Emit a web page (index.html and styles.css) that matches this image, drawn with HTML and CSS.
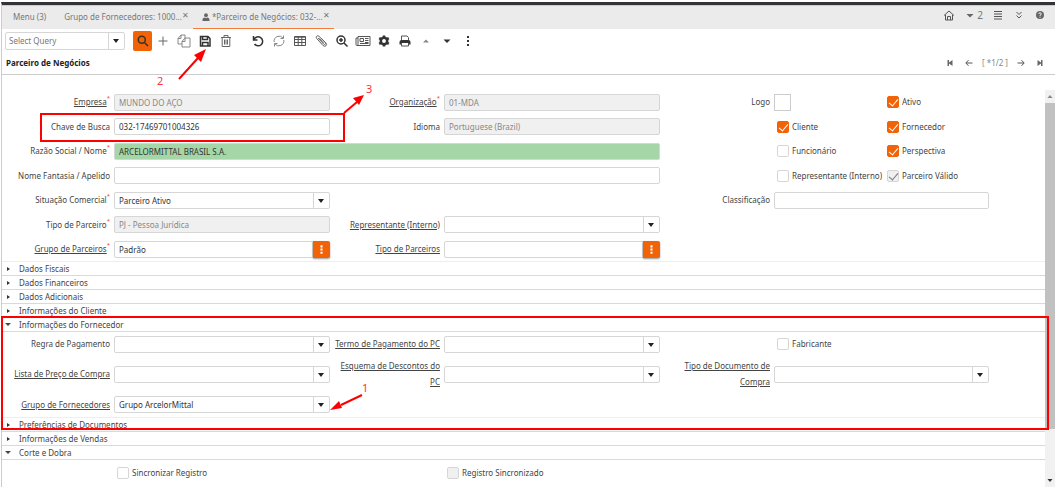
FILE: index.html
```html
<!DOCTYPE html>
<html lang="pt-BR">
<head>
    <meta charset="UTF-8">
    <meta name="viewport" content="width=device-width, initial-scale=1.0">
    <title>Parceiro de Negócios</title>
    <link rel="stylesheet" href="styles.css">
</head>
<body>

<div class="window">
    <!-- Abas -->
    <header class="tabbar">
        <nav class="tabs">
            <a class="tab" href="#">Menu (3)</a>
            <a class="tab" href="#">Grupo de Fornecedores: 1000...<span class="close">✕</span></a>
            <a class="tab active" href="#">
                <svg class="user" viewBox="0 0 8 8"><circle cx="4" cy="2.2" r="1.9"/><path d="M.5 8V6.600Q.5 4.600 2.500 4.400L4 5l1.500-.6Q7.500 4.600 7.500 6.600V8Z"/></svg>*Parceiro de Negócios: 032-...<span class="close">✕</span>
            </a>
        </nav>
        <div class="shortcuts">
            <button aria-label="Início"><svg viewBox="0 0 12 12"><path class="line" d="M1 6.500 6 2l5 4.500M2.500 6v5h7V6M4.500 11V7.500h3V11"/></svg></button>
            <button class="count"><svg viewBox="0 0 12 12"><path d="M2.500 5h7L6 8.500Z"/></svg>2</button>
            <button aria-label="Menu"><svg viewBox="0 0 12 12"><path class="line" d="M2 2.500h8M2 5h8M2 7.500h8M2 10h8"/></svg></button>
            <button aria-label="Expandir"><svg viewBox="0 0 12 12"><path class="line" d="m3.500 3 2.500 2.500L8.500 3m-5 3.500L6 9l2.500-2.500"/></svg></button>
            <button aria-label="Ajuda"><svg viewBox="0 0 12 12"><circle cx="6" cy="6" r="4"/><path class="light" d="M4.700 5Q4.700 3.800 6 3.800T7.300 5Q7.300 5.800 6 6.300V7M6 7.700v1"/></svg></button>
        </div>
    </header>

    <!-- Barra de ferramentas -->
    <div class="toolbar">
        <div class="combo query">
            <select aria-label="Select Query"><option>Select Query</option></select>
        </div>
        <button class="tool search" aria-label="Pesquisar"><svg viewBox="0 0 14 14"><circle class="thick" cx="5.800" cy="5.800" r="3.500"/><path class="thick" d="m8.500 8.500 3.500 3.500"/></svg></button>
        <button class="tool" aria-label="Novo"><svg viewBox="0 0 14 14"><path class="line mid" d="M7 2.500v9M2.500 7h9"/></svg></button>
        <button class="tool" aria-label="Copiar"><svg viewBox="0 0 14 14"><path class="line soft" d="M5 10H1V4.500L4 1h4v3M4 1v3.500H1M5 13V7.500L8 4h5v9ZM8 4v3.500H5"/></svg></button>
        <button class="tool" aria-label="Salvar"><svg viewBox="0 0 14 14"><path class="thick" d="M2.500 2.500h7.500l2 2v7.500h-9.500ZM4.500 2.500v3h5v-3M4.500 12V8.500h5.500V12"/></svg></button>
        <button class="tool" aria-label="Excluir"><svg viewBox="0 0 14 14"><path class="line mid" d="M2 3.500h10M5 3.500V1.500h4v2M3.200 3.500v9h7.600v-9M5.500 5.500v5M7 5.500v5M8.500 5.500v5"/></svg></button>
        <button class="tool apart" aria-label="Desfazer"><svg viewBox="0 0 14 14"><path class="thick" d="M2.500 2v4h4M3 5.500a4.500 4.500 0 1 1 .5 4.500"/></svg></button>
        <button class="tool" aria-label="Atualizar"><svg viewBox="0 0 14 14"><path class="line soft" d="M2.200 8A5 5 0 0 1 11 4M11.500 1.500V4.500H8.500M11.800 6A5 5 0 0 1 3 10M2.500 12.500v-3h3"/></svg></button>
        <button class="tool" aria-label="Grade"><svg viewBox="0 0 14 14"><path class="line" d="M1.500 2.500h11v9h-11ZM1.500 3.200h11M1.500 5.500h11M1.500 8.500h11M5.200 3v8.500M8.800 3v8.500"/></svg></button>
        <button class="tool" aria-label="Anexo"><svg viewBox="0 0 14 14"><path class="line mid" d="m4 4 5.500 6q1 1 1.800.3t0-1.800L5 2.300Q3.800 1.200 2.700 2.200t0 2.300L9 11.500q1.800 1.500 3 .3t0-2.600L7 4M5.500 4.500l4 4.500"/></svg></button>
        <button class="tool" aria-label="Zoom"><svg viewBox="0 0 14 14"><circle class="thick" cx="6" cy="6" r="4"/><path class="thick" d="m9 9 3.500 3.500M6 4v4M4 6h4"/></svg></button>
        <button class="tool wide" aria-label="Relatório"><svg viewBox="0 0 16 14"><path class="line" d="M3 2.500h12v9H2q-1 0-1-1V4h2M3 2.500v8q0 1-1 1M5 4.500h3.500v3H5ZM10 4.500h3.500M10 6.500h3.500M10 8.500h3.500M5 9.500h8.500"/></svg></button>
        <button class="tool" aria-label="Processo"><svg viewBox="0 0 14 14"><circle class="gear" cx="7" cy="7" r="3.200"/><path class="teeth" d="M7 1.500v2M7 10.500v2M2.200 4.200l1.800 1M10 8.800l1.800 1M2.200 9.800l1.800-1M10 5.200l1.800-1"/></svg></button>
        <button class="tool" aria-label="Imprimir"><svg viewBox="0 0 14 14"><path d="M1.500 10.500V8q0-2 2-2h7q2 0 2 2v2.500h-2V9h-7v1.500Z"/><path class="line" d="M3.500 6V2h5.500l1.500 1.500V6M3.500 9v3h7V9"/></svg></button>
        <button class="tool" aria-label="Anterior"><svg viewBox="0 0 14 14"><path class="faint" d="M4 8.500h6L7 5.500Z"/></svg></button>
        <button class="tool" aria-label="Próximo"><svg viewBox="0 0 14 14"><path d="M3.500 5.500h7L7 9Z"/></svg></button>
        <button class="tool" aria-label="Mais"><svg viewBox="0 0 14 14"><path d="M6 2h2v2H6ZM6 6h2v2H6ZM6 10h2v2H6Z"/></svg></button>
    </div>

    <div class="titlebar">
        <h1>Parceiro de Negócios</h1>
        <div class="pager">
            <button aria-label="Primeiro"><svg viewBox="0 0 12 12"><path d="M3.500 3H5v2.500L8.500 3v6L5 6.500V9H3.500Z"/></svg></button>
            <button aria-label="Registro anterior"><svg viewBox="0 0 12 12"><path class="line" d="M9.500 6H3M5.500 3.200 2.800 6l2.700 2.800"/></svg></button>
            <span>[ *1/2 ]</span>
            <button aria-label="Próximo registro"><svg viewBox="0 0 12 12"><path class="line" d="M2.500 6H9M6.500 3.200 9.200 6 6.500 8.800"/></svg></button>
            <button aria-label="Último"><svg viewBox="0 0 12 12"><path d="M8.500 3H7v2.500L3.500 3v6L7 6.500V9h1.500Z"/></svg></button>
        </div>
    </div>

    <div class="content">
        <form class="detail">
            <div class="fields main">
                <label class="start link req" for="empresa">Empresa</label>
                <input class="box" id="empresa" value="MUNDO DO AÇO" disabled>
                <label class="link req" for="org">Organização</label>
                <input class="box" id="org" value="01-MDA" disabled>
                <label for="logo">Logo</label>
                <div class="checks">
                    <button type="button" class="logo" id="logo"></button>
                    <label class="check"><input type="checkbox" checked>Ativo</label>
                </div>

                <label class="start" for="chave">Chave de Busca</label>
                <input class="box" id="chave" value="032-17469701004326">
                <label for="idioma">Idioma</label>
                <input class="box" id="idioma" value="Portuguese (Brazil)" disabled>
                <div class="checks">
                    <label class="check"><input type="checkbox" checked>Cliente</label>
                    <label class="check"><input type="checkbox" checked>Fornecedor</label>
                </div>

                <label class="start req" for="razao">Razão Social / Nome</label>
                <input class="box long filled" id="razao" value="ARCELORMITTAL BRASIL S.A.">
                <div class="checks">
                    <label class="check"><input type="checkbox">Funcionário</label>
                    <label class="check"><input type="checkbox" checked>Perspectiva</label>
                </div>

                <label class="start" for="fantasia">Nome Fantasia / Apelido</label>
                <input class="box long" id="fantasia">
                <div class="checks">
                    <label class="check"><input type="checkbox">Representante (Interno)</label>
                    <label class="check"><input type="checkbox" checked disabled>Parceiro Válido</label>
                </div>

                <label class="start req" for="situacao">Situação Comercial</label>
                <div class="box combo"><select id="situacao"><option>Parceiro Ativo</option></select></div>
                <label class="third" for="classificacao">Classificação</label>
                <input class="box" id="classificacao">

                <label class="start req" for="tipo">Tipo de Parceiro</label>
                <input class="box" id="tipo" value="PJ - Pessoa Jurídica" disabled>
                <label class="link" for="representante">Representante (Interno)</label>
                <div class="box combo"><select id="representante"><option></option></select></div>

                <label class="start link req" for="grupo">Grupo de Parceiros</label>
                <div class="lookup"><input class="box" id="grupo" value="Padrão"><button type="button" aria-label="Buscar grupo"><svg viewBox="0 0 16 16"><path d="M7 4h2v2H7ZM7 7h2v2H7ZM7 10h2v2H7Z"/></svg></button></div>
                <label class="link" for="tipos">Tipo de Parceiros</label>
                <div class="lookup"><input class="box" id="tipos"><button type="button" aria-label="Buscar tipo"><svg viewBox="0 0 16 16"><path d="M7 4h2v2H7ZM7 7h2v2H7ZM7 10h2v2H7Z"/></svg></button></div>
            </div>

            <button type="button" class="group">Dados Fiscais</button>
            <button type="button" class="group">Dados Financeiros</button>
            <button type="button" class="group">Dados Adicionais</button>
            <button type="button" class="group">Informações do Cliente</button>
            <button type="button" class="group open">Informações do Fornecedor</button>

            <div class="fields supplier">
                <label class="start" for="regra">Regra de Pagamento</label>
                <div class="box combo"><select id="regra"><option></option></select></div>
                <label class="link" for="termo">Termo de Pagamento do PC</label>
                <div class="box combo"><select id="termo"><option></option></select></div>
                <div class="checks">
                    <label class="check"><input type="checkbox">Fabricante</label>
                </div>

                <label class="start link" for="lista">Lista de Preço de Compra</label>
                <div class="box combo"><select id="lista"><option></option></select></div>
                <label class="link" for="esquema">Esquema de Descontos do PC</label>
                <div class="box combo"><select id="esquema"><option></option></select></div>
                <label class="link" for="documento">Tipo de Documento de Compra</label>
                <div class="box combo"><select id="documento"><option></option></select></div>

                <label class="start link" for="fornecedores">Grupo de Fornecedores</label>
                <div class="box combo"><select id="fornecedores"><option>Grupo ArcelorMittal</option></select></div>
            </div>

            <button type="button" class="group">Preferências de Documentos</button>
            <button type="button" class="group">Informações de Vendas</button>
            <button type="button" class="group open">Corte e Dobra</button>

            <div class="fields sync">
                <div class="first"><label class="check"><input type="checkbox">Sincronizar Registro</label></div>
                <div class="second"><label class="check"><input type="checkbox" disabled>Registro Sincronizado</label></div>
            </div>
        </form>

        <div class="scrollbar">
            <svg viewBox="0 0 10 13"><path class="faint" d="M2.500 8h5L5 5Z"/></svg>
            <div class="track"><div class="thumb"></div></div>
            <svg viewBox="0 0 10 13"><path d="M2.500 5h5L5 8Z"/></svg>
        </div>
    </div>
</div>

<!-- Marcações do passo a passo -->
<svg class="marks" width="1056" height="490" viewBox="0 0 1056 490">
    <rect x="41" y="114" width="303" height="27"/>
    <rect x="2" y="317" width="1046" height="112"/>
    <path d="M344 113 357 102M179 79 198 58M362 395 341 405"/>
    <path class="head" d="m364 95-5 10-6-7ZM206 49l-5 13-7-7ZM330 410l9-9 3 7Z"/>
    <text x="366" y="93">3</text>
    <text x="157" y="85">2</text>
    <text x="362" y="392">1</text>
</svg>

</body>
</html>
```

FILE: styles.css
```css
* {
    box-sizing: border-box;
}
body {
    margin: 0;
    padding: 2px 1px 3px;
    background: #fff;
    color: #444;
    font-family: "Noto Sans", "Open Sans", sans-serif;
    font-size: 8px;
    line-height: 16px;
}
button, input, select {
    margin: 0;
    padding: 0;
    border: 0;
    background: none;
    color: inherit;
    font: inherit;
}
svg {
    display: block;
    fill: #333;
}
.line, .thick, .light, .teeth, .gear {
    fill: none;
    stroke: #555;
    stroke-width: 1;
}
.thick {
    stroke: #333;
    stroke-width: 1.5;
}
.mid {
    stroke: #666;
}
.soft {
    stroke: #888;
}
.light {
    stroke: #eee;
}
.gear, .teeth {
    stroke: #333;
    stroke-width: 2.5;
}
.faint {
    fill: #888;
}
.window {
    display: flex;
    flex-direction: column;
    min-height: calc(100vh - 5px);
    border-top: 3px solid #333438;
    border-left: 1px solid #ccc;
}

/* Abas */
.tabbar {
    display: flex;
    justify-content: space-between;
    height: 24px;
    border-top: 1px solid #ccc;
    background: #ebebeb;
    color: #777;
}
.tabs {
    display: flex;
}
.tab {
    display: flex;
    align-items: center;
    padding: 0 4px 0 9px;
    border-bottom: 1px solid transparent;
    color: inherit;
    text-decoration: none;
    white-space: nowrap;
}
.tab:first-child {
    padding: 0 9px 0 11px;
}
.tab.active {
    border-color: #f47b3a;
}
.close {
    padding-bottom: 4px;
}
.user {
    width: 8px;
    height: 8px;
    margin-right: 2px;
    fill: #666;
}
.shortcuts {
    display: flex;
    align-items: center;
    gap: 9px;
    padding: 0 9px 6px 0;
    font-size: 10px;
}
.shortcuts svg, .pager svg {
    width: 12px;
    height: 12px;
    fill: #666;
}
.count {
    display: flex;
    align-items: center;
    gap: 1px;
}

/* Barra de ferramentas */
.toolbar {
    display: flex;
    align-items: center;
    height: 23px;
    padding-left: 3px;
}
.tool {
    display: flex;
    align-items: center;
    justify-content: center;
    width: 21px;
    height: 20px;
}
.tool svg {
    width: 14px;
    height: 14px;
}
.tool.wide svg {
    width: 16px;
}
.tool.search {
    width: 19px;
    margin-left: 8px;
    border-radius: 2px;
    background: #f26207;
}
.tool.apart {
    margin-left: 11px;
}
.titlebar {
    display: flex;
    align-items: center;
    justify-content: space-between;
    height: 23px;
    padding: 0 9px 0 4px;
    border-bottom: 1px solid #ccc;
}
h1 {
    margin: 0;
    color: #222;
    font-size: 8px;
}
.pager {
    display: flex;
    align-items: center;
    gap: 7px;
    color: #888;
}

/* Formulário */
.content {
    display: flex;
    flex: 1;
}
.detail {
    flex: 1;
    min-width: 0;
}
.fields {
    display: grid;
    grid-template-columns: 112fr 216fr 114fr 216fr 114fr 215fr 56fr;
    align-items: center;
}
.main {
    grid-auto-rows: 24px 25px;
    padding-top: 15px;
    border-bottom: 1px solid #eee;
}
.supplier {
    grid-template-rows: 24px 36px 25px;
    border-bottom: 1px solid #eee;
}
.sync {
    grid-auto-rows: 25px;
}
.fields > label {
    padding-right: 4px;
    text-align: right;
}
.fields > .start {
    grid-column: 1;
}
.fields > .third {
    grid-column: 5;
}
.first {
    grid-column: 2;
}
.second {
    grid-column: 4;
}
.link {
    text-decoration: underline;
}
.req::after {
    content: "*";
    display: inline-block;
    color: #f33;
    font-size: 6px;
    line-height: 8px;
    vertical-align: top;
}
.box, .query {
    width: 100%;
    min-width: 0;
    height: 17px;
    border: 1px solid #d6d6d6;
    border-radius: 2px;
    background: #fff;
    color: #333;
}
input.box {
    padding: 0 4px;
}
.box:disabled {
    background: #f0f0f0;
    color: #888;
}
.long {
    grid-column: 2 / 5;
}
.filled {
    background: #a5d6a7;
}
.combo {
    position: relative;
}
.query {
    width: 120px;
    height: 18px;
    color: #777;
}
.combo select {
    display: block;
    width: 100%;
    height: 100%;
    padding: 0 20px 0 4px;
    appearance: none;
}
.combo::before {
    content: "";
    position: absolute;
    top: 0;
    right: 15px;
    bottom: 0;
    border-left: 1px solid #d6d6d6;
}
.combo::after {
    content: "";
    position: absolute;
    top: 6px;
    right: 5px;
    border: 3px solid transparent;
    border-top: 4px solid #222;
    border-bottom: 0;
    pointer-events: none;
}
.query select {
    padding-left: 3px;
}
.lookup {
    display: flex;
    height: 17px;
}
.lookup .box {
    flex: 1;
    border-radius: 2px 0 0 2px;
}
.lookup button {
    width: 17px;
    border-radius: 0 2px 2px 0;
    background: #f26207;
    box-shadow: 0 1px 2px rgba(0, 0, 0, 0.4);
}
.lookup svg {
    fill: #fff;
}
.checks {
    display: grid;
    grid-column: 6 / 8;
    grid-template-columns: 110fr 161fr;
    align-items: center;
}
.check {
    display: flex;
    align-items: center;
    gap: 3px;
    padding-left: 3px;
    white-space: nowrap;
}
.check input {
    width: 12px;
    height: 12px;
    border: 1px solid #d6d6d6;
    border-radius: 2px;
    appearance: none;
}
.check input:checked {
    border-color: #f26207;
    background: #f26207;
}
.check input:checked::before {
    content: "";
    display: block;
    width: 4px;
    height: 8px;
    margin-left: 3px;
    border: solid #fff;
    border-width: 0 1px 1px 0;
    transform: rotate(40deg);
}
.check input:disabled {
    border-color: #d6d6d6;
    background: #f0f0f0;
}
.check input:disabled::before {
    border-color: #777;
}
.logo {
    width: 17px;
    height: 17px;
    border: 1px solid #ccc;
}

/* Grupos recolhíveis */
.group {
    display: flex;
    align-items: center;
    width: 100%;
    height: 14px;
    border-bottom: 1px solid #d9d9d9;
    line-height: 13px;
}
.group::before {
    content: "";
    flex: none;
    margin: 0 9px 0 5px;
    border: 2px solid transparent;
    border-left: 3px solid #333;
    border-right: 0;
}
.group.open::before {
    margin: 0 8px 0 3px;
    border: 3px solid transparent;
    border-top: 3px solid #444;
    border-bottom: 0;
}

/* Barra de rolagem */
.scrollbar {
    display: flex;
    flex-direction: column;
    width: 10px;
    margin-top: 15px;
    background: #f1f1f1;
}
.scrollbar svg {
    width: 10px;
    height: 13px;
}
.track {
    flex: 1;
}
.thumb {
    height: 88%;
    background: #c1c1c1;
}

/* Marcações */
.marks {
    position: absolute;
    top: 0;
    left: 0;
    fill: none;
    stroke: #f00;
    stroke-width: 2;
    pointer-events: none;
}
.marks .head, .marks text {
    fill: #f00;
    stroke: none;
}
.marks text {
    fill: #f33;
    font-size: 11px;
}
```
